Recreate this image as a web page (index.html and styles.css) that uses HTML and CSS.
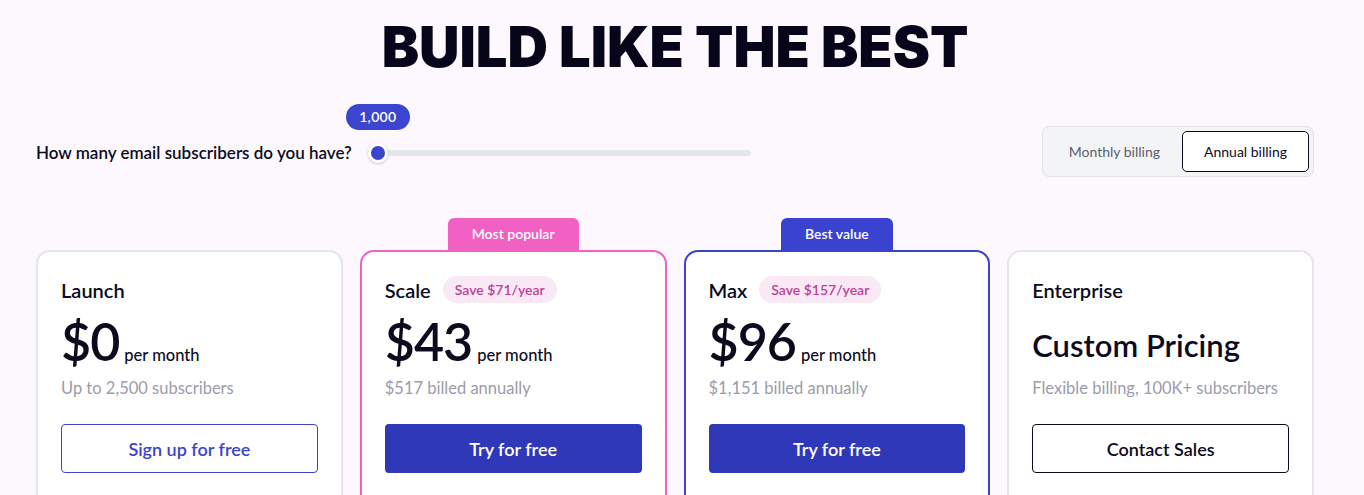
FILE: index.html
```html
<!DOCTYPE html>
<html lang="en">

<head>
    <meta charset="UTF-8">
    <meta name="viewport" content="width=device-width, initial-scale=1.0">
    <title>Pricing</title>
    <link rel="stylesheet" href="styles.css">
</head>

<body>
    <div class="page">
        <h1 class="title">BUILD LIKE THE BEST</h1>

        <div class="controls">
            <div class="subscribers">
                <span class="question">How many email subscribers do you have?</span>
                <div class="slider">
                    <div class="track"></div>
                    <div class="thumb"></div>
                    <div class="bubble">1,000</div>
                </div>
            </div>
            <div class="billing">
                <button class="billing-option">Monthly billing</button>
                <button class="billing-option active">Annual billing</button>
            </div>
        </div>

        <div class="plans">
            <div class="plan">
                <div class="tab-slot"></div>
                <div class="card">
                    <div class="plan-head">
                        <span class="plan-name">Launch</span>
                    </div>
                    <div class="price-row">
                        <span class="price">$0</span>
                        <span class="period">per month</span>
                    </div>
                    <p class="note">Up to 2,500 subscribers</p>
                    <button class="cta outline">Sign up for free</button>
                </div>
            </div>

            <div class="plan">
                <div class="tab-slot"><span class="tab pink">Most popular</span></div>
                <div class="card popular">
                    <div class="plan-head">
                        <span class="plan-name">Scale</span>
                        <span class="save">Save $71/year</span>
                    </div>
                    <div class="price-row">
                        <span class="price">$43</span>
                        <span class="period">per month</span>
                    </div>
                    <p class="note">$517 billed annually</p>
                    <button class="cta solid">Try for free</button>
                </div>
            </div>

            <div class="plan">
                <div class="tab-slot"><span class="tab blue">Best value</span></div>
                <div class="card best">
                    <div class="plan-head">
                        <span class="plan-name">Max</span>
                        <span class="save">Save $157/year</span>
                    </div>
                    <div class="price-row">
                        <span class="price">$96</span>
                        <span class="period">per month</span>
                    </div>
                    <p class="note">$1,151 billed annually</p>
                    <button class="cta solid">Try for free</button>
                </div>
            </div>

            <div class="plan">
                <div class="tab-slot"></div>
                <div class="card">
                    <div class="plan-head">
                        <span class="plan-name">Enterprise</span>
                    </div>
                    <div class="price-row">
                        <span class="custom">Custom Pricing</span>
                    </div>
                    <p class="note">Flexible billing, 100K+ subscribers</p>
                    <button class="cta dark">Contact Sales</button>
                </div>
            </div>
        </div>
    </div>
</body>

</html>
```

FILE: styles.css
```css
body {
    margin: 0;
    padding: 0;
    background-color: #fdf8fd;
    font-family: Lato, "Open Sans", sans-serif;
    color: #0c0b1d;
    overflow: hidden;
}

.page {
    width: 1278px;
    margin-left: 36px;
}

.title {
    margin: 19px 0 0;
    font-family: Inter, sans-serif;
    font-weight: 900;
    font-size: 56px;
    line-height: 56px;
    letter-spacing: 0;
    text-align: center;
    color: #07051a;
}

.controls {
    display: flex;
    justify-content: space-between;
    align-items: center;
    margin-top: 51px;
}

.subscribers {
    display: flex;
    align-items: center;
    gap: 16px;
}

.question {
    font-size: 17px;
    font-weight: 600;
    margin-top: 2px;
}

.slider {
    position: relative;
    width: 383px;
    height: 20px;
    margin-top: 3px;
}

.track {
    position: absolute;
    left: 9px;
    right: 0;
    top: 7px;
    height: 6px;
    border-radius: 3px;
    background-color: #e5e6eb;
}

.thumb {
    position: absolute;
    left: 0;
    top: 0;
    width: 14px;
    height: 14px;
    border: 3px solid #fff;
    border-radius: 50%;
    background-color: #3a44cc;
    box-shadow: 0 1px 3px rgba(0, 0, 0, 0.2);
}

.bubble {
    position: absolute;
    left: -22px;
    top: -39px;
    width: 64px;
    height: 26px;
    line-height: 26px;
    border-radius: 13px;
    background-color: #3b45d0;
    color: #fff;
    font-size: 14px;
    font-weight: 600;
    text-align: center;
    letter-spacing: 0.3px;
}

.billing {
    display: flex;
    padding: 4px;
    border: 1px solid #e2e3e8;
    border-radius: 7px;
    background-color: #f3f4f6;
}

.billing-option {
    height: 41px;
    padding: 0 21px;
    border: 1px solid transparent;
    border-radius: 5px;
    background: none;
    font-family: inherit;
    font-size: 14px;
    color: #5b5e6b;
    cursor: pointer;
}

.billing-option.active {
    background-color: #fff;
    border-color: #0c0b1d;
    color: #0c0b1d;
}

.plans {
    display: grid;
    grid-template-columns: repeat(4, 1fr);
    gap: 17px;
    margin-top: 41px;
}

.tab-slot {
    height: 32px;
    display: flex;
    justify-content: center;
    align-items: flex-end;
}

.tab {
    height: 32px;
    line-height: 32px;
    padding: 0 24px;
    border-radius: 6px 6px 0 0;
    color: #fff;
    font-size: 14px;
    font-weight: 600;
}

.tab.pink {
    background-color: #f061c3;
}

.tab.blue {
    background-color: #3a43cf;
}

.card {
    height: 300px;
    padding: 24px 23px;
    border: 2px solid #e6e4ec;
    border-radius: 14px;
    background-color: #fff;
}

.card.popular {
    border-color: #f061c3;
}

.card.best {
    border-color: #3a43cf;
}

.plan-head {
    display: flex;
    align-items: center;
    gap: 12px;
    height: 27px;
}

.plan-name {
    font-size: 20px;
    font-weight: 600;
}

.save {
    height: 27px;
    line-height: 27px;
    padding: 0 12px;
    border-radius: 14px;
    background-color: #f8e9f4;
    color: #c13f99;
    font-size: 14px;
    font-weight: 600;
}

.price-row {
    display: flex;
    align-items: baseline;
    gap: 5px;
    height: 48px;
    margin-top: 14px;
}

.price {
    font-size: 52px;
    font-weight: 600;
    line-height: 48px;
    letter-spacing: -1px;
}

.period {
    font-size: 16.5px;
    font-weight: 500;
}

.custom {
    padding-top: 4px;
    font-size: 31px;
    font-weight: 600;
    line-height: 48px;
}

.note {
    margin: 13px 0 0;
    font-size: 16.5px;
    line-height: 20px;
    color: #9c9bab;
}

.cta {
    display: block;
    width: 100%;
    height: 49px;
    margin-top: 26px;
    border-radius: 4px;
    font-family: inherit;
    font-size: 18px;
    font-weight: 600;
    cursor: pointer;
}

.cta.outline {
    border: 1px solid #3a44cc;
    background-color: #fff;
    color: #3a44cc;
}

.cta.solid {
    border: none;
    background-color: #2f38b9;
    color: #fff;
}

.cta.dark {
    border: 1px solid #0c0b1d;
    background-color: #fff;
    color: #0c0b1d;
}
```
